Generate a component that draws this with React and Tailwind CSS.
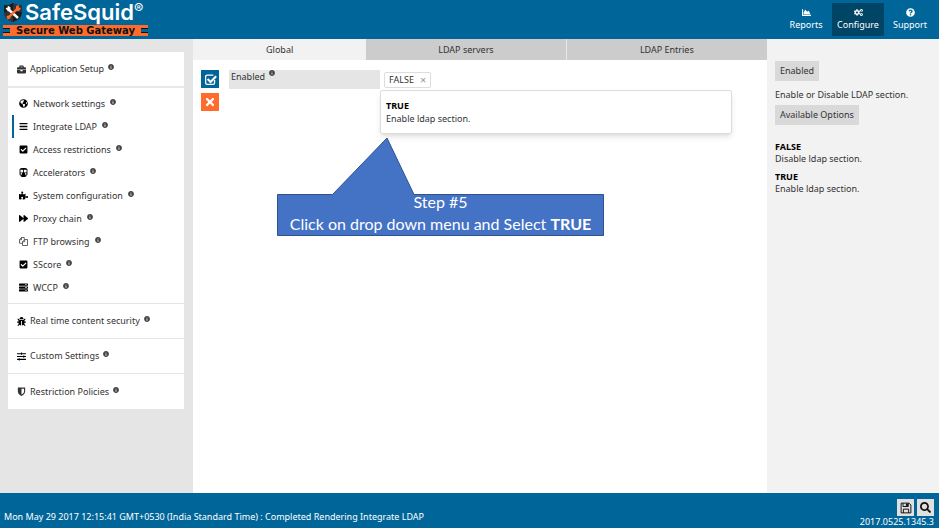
import {
  FaBars,
  FaBriefcase,
  FaBug,
  FaChartArea,
  FaCheckSquare,
  FaCogs,
  FaForward,
  FaGlobeAmericas,
  FaInfoCircle,
  FaPuzzlePiece,
  FaQuestionCircle,
  FaSearch,
  FaServer,
  FaSlidersH,
  FaSubway,
  FaTimes,
} from "react-icons/fa";

function ShieldIcon() {
  return (
    <svg viewBox="0 0 16 16" className="size-[9px]" fill="currentColor" aria-hidden="true">
      <path
        fillRule="evenodd"
        d="M1.5 1h13v7c0 4-3.5 6.500-6.500 8-3-1.500-6.500-4-6.500-8zM8 3v10.500c2.500-1.300 4.500-3 4.500-5.500V3z"
      />
    </svg>
  );
}

function CopyIcon() {
  return (
    <svg viewBox="0 0 18 18" className="size-[9px]" fill="none" stroke="currentColor" strokeWidth="1.500" aria-hidden="true">
      <path d="M7 12.500H1V5.500L5 1h5.500v4M5 1v4.500H1" />
      <path d="M7 9.500 11.500 5H17v12H7zM11.500 5v4.500H7" />
    </svg>
  );
}

function FloppyIcon() {
  return (
    <svg viewBox="0 0 16 16" className="size-3" fill="none" stroke="currentColor" strokeWidth="1.300" aria-hidden="true">
      <path d="M1.500 1.500h10.500l2.500 2.500v10.500h-13zM4.500 14.500v-5h7v5M4 1.500v4.500h7V1.500" />
      <path d="M8.500 2.500h1.500v2.500H8.500z" fill="currentColor" />
    </svg>
  );
}

function CheckedBoxIcon() {
  return (
    <svg viewBox="0 0 16 16" className="size-[13px]" fill="none" stroke="currentColor" aria-hidden="true">
      <path d="M13 8.500V12a2 2 0 0 1-2 2H4a2 2 0 0 1-2-2V4.500a2 2 0 0 1 2-2h7.500" strokeWidth="1.600" />
      <path d="M4.500 7.500 8 11l7-7" strokeWidth="2.600" />
    </svg>
  );
}

const setupItems = [
  { label: "Network settings", Icon: FaGlobeAmericas },
  { label: "Integrate LDAP", Icon: FaBars, active: true },
  { label: "Access restrictions", Icon: FaCheckSquare },
  { label: "Accelerators", Icon: FaSubway },
  { label: "System configuration", Icon: FaPuzzlePiece },
  { label: "Proxy chain", Icon: FaForward },
  { label: "FTP browsing", Icon: CopyIcon },
  { label: "SScore", Icon: FaCheckSquare },
  { label: "WCCP", Icon: FaServer },
];

const otherSections = [
  { label: "Real time content security", Icon: FaBug },
  { label: "Custom Settings", Icon: FaSlidersH },
  { label: "Restriction Policies", Icon: ShieldIcon },
];

const topLinks = [
  { label: "Reports", Icon: FaChartArea },
  { label: "Configure", Icon: FaCogs, active: true },
  { label: "Support", Icon: FaQuestionCircle },
];

function Info() {
  return <FaInfoCircle className="mb-1 size-[6px] shrink-0 text-[#444]" aria-hidden="true" />;
}

function Logo() {
  return (
    <a href="#home" className="ml-[3px] flex w-[145px] flex-col text-white" aria-label="SafeSquid Secure Web Gateway">
      <span className="flex h-[25px] items-center gap-[3px] pl-px">
        <svg viewBox="0 0 18 19" className="h-[19px] w-[18px] shrink-0" aria-hidden="true">
          <path d="M0 2Q5 3 9 0q4 3 9 2v7q0 7-9 10Q0 16 0 9z" fill="#1b1b1b" />
          <path d="M9 0q4 3 9 2v7H9zM0 9h9v10Q0 16 0 9z" fill="#30343a" />
          <path d="M3.500 5.500 14 15" stroke="#fff" strokeWidth="2.400" />
          <path d="m1.500 5 2-.2.400-2 2.500 1.400v3L4 8.500z" fill="#fff" />
          <path d="M14.500 4.500 4 15" stroke="#ff6b2b" strokeWidth="2.400" />
          <path d="m12 3 3-1-.5 2.500 2.500.5-2 3h-3zM2.500 13l3-.5 1 3-3 1z" fill="#ff6b2b" />
        </svg>
        <span className="flex items-start font-['Inter',sans-serif] text-[22px] leading-[25px] font-semibold">
          SafeSquid<span className="text-[14px] leading-[18px] font-normal">®</span>
        </span>
      </span>
      <span className="flex h-[11px] items-center justify-between bg-[#ff6b2b] font-['DejaVu_Sans',sans-serif] text-[10px] leading-[11px] font-bold whitespace-nowrap text-[#111]">
        <span className="h-[5px] w-[7px] border-y border-[#111] bg-[#006699]" />
        Secure Web Gateway
        <span className="h-[5px] w-[7px] border-y border-[#111] bg-[#006699]" />
      </span>
    </a>
  );
}

function Sidebar() {
  return (
    <nav className="w-[193px] shrink-0 bg-[#e5e5e5] px-2 pt-[13px]" aria-label="Configuration">
      <div className="mr-px bg-white">
        <button type="button" className="flex h-9 w-full items-center gap-1 border-b-2 border-[#e8e8e8] pl-[9px]">
          <FaBriefcase className="size-[9px]" />
          <span>Application Setup</span>
          <Info />
        </button>
        <ul className="border-b border-[#e4e4e4] py-1">
          {setupItems.map(({ label, Icon, active }) => (
            <li key={label}>
              <a
                href="#section"
                aria-current={active ? "page" : undefined}
                className={
                  active
                    ? "ml-1 flex h-[23px] items-center gap-[5px] border-l-2 border-[#006699] pl-[5px]"
                    : "ml-1 flex h-[23px] items-center gap-[5px] border-l-2 border-transparent pl-[5px]"
                }
              >
                <Icon className="size-[9px] text-black" />
                <span>{label}</span>
                <Info />
              </a>
            </li>
          ))}
        </ul>
        {otherSections.map(({ label, Icon }) => (
          <button
            key={label}
            type="button"
            className="flex h-[35px] w-full items-center gap-1 border-b border-[#e4e4e4] pl-[9px] last:border-0"
          >
            <Icon className="size-[9px] text-black" />
            <span>{label}</span>
            <Info />
          </button>
        ))}
      </div>
    </nav>
  );
}

function Callout() {
  return (
    <div className="absolute top-[98px] left-[84px] w-[327px]">
      <svg viewBox="0 0 327 99" className="block h-[99px] w-[327px]" aria-hidden="true">
        <path
          d="M.5 57.500H55.500L110 1l27 56.500H326.500V98.500H.5z"
          fill="#4472c4"
          stroke="#2f528f"
        />
      </svg>
      <p className="absolute inset-x-0 bottom-px text-center font-['Lato',sans-serif] text-[16px] leading-[22px] text-white">
        Step #5
        <br />
        Click on drop down menu and Select <strong>TRUE</strong>
      </p>
    </div>
  );
}

function MainPanel() {
  return (
    <main className="relative min-w-0 flex-1 bg-white">
      <div role="tablist" className="grid h-[21px] grid-cols-[173fr_200fr_200fr] text-center">
        <button type="button" role="tab" aria-selected="true" className="bg-[#f2f2f2]">
          Global
        </button>
        <button type="button" role="tab" aria-selected="false" className="border-r border-[#e8e8e8] bg-[#ccc]">
          LDAP servers
        </button>
        <button type="button" role="tab" aria-selected="false" className="bg-[#ccc]">
          LDAP Entries
        </button>
      </div>
      <div className="flex pt-[10px] pr-[35px] pl-2">
        <div className="flex w-7 shrink-0 flex-col gap-[5px]">
          <button type="button" aria-label="Save" className="flex size-[18px] items-center justify-center bg-[#006699] text-white">
            <CheckedBoxIcon />
          </button>
          <button type="button" aria-label="Cancel" className="flex size-[18px] items-center justify-center bg-[#ff6b2b] text-white">
            <FaTimes className="size-3" />
          </button>
        </div>
        <div className="flex h-[19px] w-[151px] shrink-0 items-start gap-1 bg-[#e5e5e5] px-[2px]">
          <span className="leading-[14px]">Enabled</span>
          <Info />
        </div>
        <div className="min-w-0 flex-1">
          <div className="flex h-5 items-center pl-1">
            <span className="flex h-4 items-center gap-[6px] rounded-xs border border-[#ddd] px-1">
              FALSE
              <button type="button" aria-label="Remove FALSE" className="mb-px text-[11px] leading-3 text-[#999]">
                ×
              </button>
            </span>
          </div>
          <div role="listbox" aria-label="Enabled" className="rounded-xs border border-[#ddd] bg-white px-[5px] py-2 shadow-md">
            <div role="option" aria-selected="false" className="leading-[13px]">
              <strong className="text-black">TRUE</strong>
              <p>Enable ldap section.</p>
            </div>
          </div>
        </div>
      </div>
      <Callout />
    </main>
  );
}

function HelpPanel() {
  return (
    <aside className="w-[172px] shrink-0 bg-[#f2f2f2] pt-[22px] pl-2 leading-3">
      <h2 className="w-fit bg-[#d9d9d9] px-[5px] py-1">Enabled</h2>
      <p className="mt-2">Enable or Disable LDAP section.</p>
      <h2 className="mt-1 w-fit bg-[#d9d9d9] px-[5px] py-1">Available Options</h2>
      <dl className="mt-4">
        <dt className="font-bold text-black">FALSE</dt>
        <dd>Disable ldap section.</dd>
        <dt className="mt-[6px] font-bold text-black">TRUE</dt>
        <dd>Enable ldap section.</dd>
      </dl>
    </aside>
  );
}

export default function App() {
  return (
    <div className="flex min-h-screen flex-col font-['Noto_Sans',sans-serif] text-[9px] text-[#333]">
      <header className="flex h-[39px] items-start justify-between bg-[#006699]">
        <Logo />
        <nav className="flex pt-[3px] pr-[3px] text-white" aria-label="Main">
          {topLinks.map(({ label, Icon, active }) => (
            <a
              key={label}
              href="#top"
              className={
                active
                  ? "flex h-[33px] w-[52px] flex-col items-center gap-[2px] bg-[#004466] pt-[5px] leading-3"
                  : "flex h-[33px] w-[52px] flex-col items-center gap-[2px] pt-[5px] leading-3"
              }
            >
              <Icon className="size-[9px]" />
              {label}
            </a>
          ))}
        </nav>
      </header>
      <div className="flex flex-1">
        <Sidebar />
        <MainPanel />
        <HelpPanel />
      </div>
      <footer className="flex h-[35px] items-end justify-between bg-[#006699] pl-1 text-white">
        <p className="pb-[5px]">
          Mon May 29 2017 12:15:41 GMT+0530 (India Standard Time) : Completed Rendering Integrate LDAP
        </p>
        <div className="flex flex-col items-end pr-[5px]">
          <div className="flex gap-[3px] text-[#111]">
            <button type="button" aria-label="Save configuration" className="flex size-[17px] items-center justify-center bg-[#e0e0e0]">
              <FloppyIcon />
            </button>
            <button type="button" aria-label="Search" className="flex size-[17px] items-center justify-center bg-[#e0e0e0]">
              <FaSearch className="size-[11px]" />
            </button>
          </div>
          <span className="leading-3">2017.0525.1345.3</span>
        </div>
      </footer>
    </div>
  );
}
